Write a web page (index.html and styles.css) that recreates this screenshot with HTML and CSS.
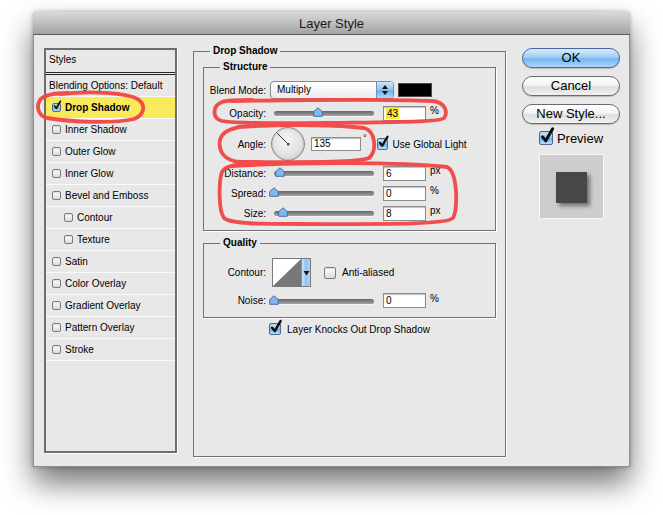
FILE: index.html
```html
<!DOCTYPE html>
<html>
<head>
<meta charset="utf-8">
<title>Layer Style</title>
<link rel="stylesheet" href="styles.css">
</head>
<body>
<div class="dialog">
  <div class="titlebar">Layer Style</div>
  <div class="dlg-body">
    <div class="styles-panel">
      <div class="styles-head">Styles</div>
      <div class="srow plain">Blending Options: Default</div>
      <div class="srow sel"><span class="cb cb-s on"><svg viewBox="0 0 12 12"><path d="M2.2 6 L5 9.4 L11 -1"/></svg></span><b>Drop Shadow</b></div>
      <div class="srow"><span class="cb cb-s"></span>Inner Shadow</div>
      <div class="srow"><span class="cb cb-s"></span>Outer Glow</div>
      <div class="srow"><span class="cb cb-s"></span>Inner Glow</div>
      <div class="srow"><span class="cb cb-s"></span>Bevel and Emboss</div>
      <div class="srow sub"><span class="cb cb-s"></span>Contour</div>
      <div class="srow sub"><span class="cb cb-s"></span>Texture</div>
      <div class="srow"><span class="cb cb-s"></span>Satin</div>
      <div class="srow"><span class="cb cb-s"></span>Color Overlay</div>
      <div class="srow"><span class="cb cb-s"></span>Gradient Overlay</div>
      <div class="srow"><span class="cb cb-s"></span>Pattern Overlay</div>
      <div class="srow"><span class="cb cb-s"></span>Stroke</div>
    </div>

    <fieldset class="main-fs">
      <legend>Drop Shadow</legend>
      <fieldset class="sub-fs structure">
        <legend>Structure</legend>
        <div class="frow r-blend">
          <span class="lbl">Blend Mode:</span>
          <div class="select"><span class="val">Multiply</span><span class="arr"><svg viewBox="0 0 8 12" width="8" height="12"><path d="M4 1 L7 5 H1 Z M4 11 L7 7 H1 Z"/></svg></span></div>
          <span class="swatch"></span>
        </div>
        <div class="frow r-op">
          <span class="lbl">Opacity:</span>
          <div class="slider"><span class="thumb" style="left:39px"><svg viewBox="0 0 10 10"><path d="M0.7 9.3 V4.6 L5 0.8 L9.3 4.6 V9.3 Z"/></svg></span></div>
          <span class="num"><span class="hl">43</span></span>
          <span class="unit">%</span>
        </div>
        <div class="frow r-angle">
          <span class="lbl">Angle:</span>
          <span class="dial"><svg viewBox="0 0 34 34" width="34" height="34"><line x1="6" y1="6" x2="17" y2="17"/><rect x="16" y="16" width="2.4" height="2.4"/></svg></span>
          <span class="num wide">135</span>
          <span class="deg">°</span>
          <span class="cb cb-m on gl"><svg viewBox="0 0 12 12"><path d="M2.2 6 L5 9.4 L11 -1"/></svg></span>
          <span class="gl-text">Use Global Light</span>
        </div>
        <div class="frow r-slide">
          <span class="lbl">Distance:</span>
          <div class="slider"><span class="thumb" style="left:1px"><svg viewBox="0 0 10 10"><path d="M0.7 9.3 V4.6 L5 0.8 L9.3 4.6 V9.3 Z"/></svg></span></div>
          <span class="num">6</span>
          <span class="unit">px</span>
        </div>
        <div class="frow r-slide">
          <span class="lbl">Spread:</span>
          <div class="slider"><span class="thumb" style="left:-5px"><svg viewBox="0 0 10 10"><path d="M0.7 9.3 V4.6 L5 0.8 L9.3 4.6 V9.3 Z"/></svg></span></div>
          <span class="num">0</span>
          <span class="unit">%</span>
        </div>
        <div class="frow r-slide">
          <span class="lbl">Size:</span>
          <div class="slider"><span class="thumb" style="left:4px"><svg viewBox="0 0 10 10"><path d="M0.7 9.3 V4.6 L5 0.8 L9.3 4.6 V9.3 Z"/></svg></span></div>
          <span class="num">8</span>
          <span class="unit">px</span>
        </div>
      </fieldset>

      <fieldset class="sub-fs quality">
        <legend>Quality</legend>
        <div class="frow r-contour">
          <span class="lbl">Contour:</span>
          <div class="contour">
            <span class="curve"><svg viewBox="0 0 28 27" width="28" height="27"><path d="M0 27 L28 0 V27 Z"/></svg></span>
            <span class="drop"><svg viewBox="0 0 7 6" width="7" height="6"><path d="M0.5 1 H6.5 L3.5 5.5 Z"/></svg></span>
          </div>
          <span class="cb cb-l aa"></span>
          <span class="aa-text">Anti-aliased</span>
        </div>
        <div class="frow r-noise">
          <span class="lbl">Noise:</span>
          <div class="slider"><span class="thumb" style="left:-5px"><svg viewBox="0 0 10 10"><path d="M0.7 9.3 V4.6 L5 0.8 L9.3 4.6 V9.3 Z"/></svg></span></div>
          <span class="num">0</span>
          <span class="unit">%</span>
        </div>
      </fieldset>

      <div class="knock">
        <span class="cb cb-l on"><svg viewBox="0 0 12 12"><path d="M2.2 6 L5 9.4 L11 -1"/></svg></span>
        <span>Layer Knocks Out Drop Shadow</span>
      </div>
    </fieldset>

    <div class="btn-col">
      <div class="btn default">OK</div>
      <div class="btn">Cancel</div>
      <div class="btn">New Style...</div>
      <div class="preview-row">
        <span class="cb cb-xl on"><svg viewBox="0 0 12 12"><path d="M2.2 6 L5 9.4 L11 -1"/></svg></span>
        <span>Preview</span>
      </div>
      <div class="preview-box"><span class="preview-sq"></span></div>
    </div>
  </div>
</div>

<svg class="annot" viewBox="0 0 663 515" width="663" height="515">
  <path d="M60 94 C88 91 128 92 139 100 C146 106 144 115 134 119 C112 124 72 122 47 118 C38 116 36 106 40 100 C44 95 54 93 68 93"/>
  <path d="M232 101 C300 100 390 99 432 101 C446 102 448 113 444 118 C440 122 400 122 330 123 C280 123 240 124 222 121 C212 118 212 106 222 102 C228 100 240 100 252 100"/>
  <path d="M238 127 C290 124 340 125 364 128 C376 131 377 151 369 158 C356 163 300 162 240 162 C225 161 218 152 220 140 C222 131 232 127 250 126"/>
  <path d="M232 166 C300 162 400 162 447 167 C458 172 458 210 453 218 C446 225 380 224 300 224 C262 224 231 224 224 218 C218 210 219 180 222 172 C225 166 236 164 252 164"/>
</svg>
</body>
</html>
```

FILE: styles.css
```css
* { box-sizing: border-box; }
html, body { margin: 0; }
body {
  width: 663px;
  height: 515px;
  background: #fff;
  font-family: "Liberation Sans", Arial, sans-serif;
  font-size: 10px;
  color: #000;
  padding: 12px 0 0 33px;
  position: relative;
  overflow: hidden;
}

.dialog {
  width: 597px;
  height: 455px;
  background: #e8e8e8;
  border: 1px solid #8f8f8f;
  border-top: none;
  border-radius: 5px 5px 0 0;
  box-shadow: 0 16px 30px rgba(0,0,0,.55), 0 0 4px rgba(0,0,0,.3);
  display: flex;
  flex-direction: column;
}

.titlebar {
  height: 23px;
  margin: 0 -1px;
  border-radius: 5px 5px 0 0;
  background: linear-gradient(#dadada, #a3a3a3);
  border-bottom: 1px solid #5b5b5b;
  text-align: center;
  font-size: 13px;
  line-height: 23px;
  color: #1a1a1a;
}

.dlg-body {
  display: flex;
  align-items: flex-start;
  padding: 13px 9px 0 10px;
  flex: 1;
}

/* styles list */
.styles-panel {
  width: 133px;
  height: 405px;
  flex: none;
  border: 2px solid #6d6d6d;
  box-shadow: 1px 1px 0 #fff;
}
.styles-head {
  height: 25px;
  padding-left: 3px;
  line-height: 20px;
  border-bottom: 3px double #262626;
}
.srow {
  height: 22px;
  border-bottom: 1px solid #fbfbfb;
  display: flex;
  align-items: center;
  gap: 4px;
  padding-left: 6px;
}
.srow.plain { padding-left: 3px; }
.srow.sub { padding-left: 18px; }
.srow.sel { background: #f9ea5b; }

/* checkboxes */
.cb {
  position: relative;
  flex: none;
  display: inline-block;
  border: 1px solid #7c7c7c;
  border-radius: 2px;
  background: linear-gradient(#ffffff, #dadada);
  box-shadow: inset 0 1px 1px rgba(0,0,0,.12);
}
.cb-s { width: 9px; height: 9px; }
.cb-m { width: 11px; height: 12px; }
.cb-l { width: 12px; height: 12px; }
.cb-xl { width: 14px; height: 14px; }
.cb.on {
  background: linear-gradient(#d4eafd, #8ec3f1 50%, #6eb0ec 55%, #b8ddfb);
  border-color: #52698a;
}
.cb svg {
  position: absolute;
  left: 0;
  top: -2px;
  width: 115%;
  height: 115%;
  overflow: visible;
  fill: none;
  stroke: #0c0c0c;
  stroke-width: 2.6;
  stroke-linecap: round;
  stroke-linejoin: round;
}

/* main group */
.main-fs {
  width: 313px;
  height: 412px;
  flex: none;
  margin: -3px 16px 0 16px;
  padding: 4px 9px 0 9px;
  border: 1px solid #737373;
  box-shadow: 1px 1px 0 #fff;
  min-width: 0;
}
.main-fs > legend {
  margin-left: 7px;
  padding: 0 3px;
  font-weight: bold;
  line-height: 12px;
}
.sub-fs {
  width: 293px;
  margin: 0;
  padding: 8px 0 9px 0;
  border: 1px solid #737373;
  box-shadow: 1px 1px 0 #fff;
  min-width: 0;
}
.sub-fs > legend {
  margin-left: 16px;
  padding: 0 3px;
  font-weight: bold;
  line-height: 12px;
}
.quality { margin-top: 6px; padding-top: 9px; }

.frow {
  display: flex;
  align-items: center;
  height: 16px;
  margin-top: 4px;
}
.r-blend { height: 18px; margin-top: 0; }
.r-op { margin-top: 6px; }
.r-angle { height: 34px; margin-top: 6px; }
.r-contour { height: 29px; margin-top: 0; }
.r-noise { height: 15px; margin-top: 6px; }

.lbl { width: 62px; flex: none; text-align: right; }

.select {
  width: 124px;
  height: 18px;
  margin-left: 4px;
  border: 1px solid #8a8a8a;
  border-radius: 4px;
  display: flex;
  background: linear-gradient(#ffffff, #ebebeb);
  overflow: hidden;
  box-shadow: 0 1px 1px rgba(0,0,0,.15);
}
.select .val { flex: 1; padding-left: 6px; line-height: 16px; }
.select .arr {
  width: 17px;
  border-left: 1px solid #7191b8;
  background: linear-gradient(#cde5fb, #8ec3f1 50%, #6fb0ec 55%, #acd6fa);
  display: flex;
  align-items: center;
  justify-content: center;
}
.select .arr svg { fill: #111; }
.swatch {
  width: 34px;
  height: 14px;
  margin-left: 4px;
  background: #000;
  border: 1px solid #4a4a4a;
}

.slider {
  position: relative;
  width: 100px;
  height: 16px;
  margin-left: 8px;
  flex: none;
}
.slider::before {
  content: "";
  position: absolute;
  left: 0;
  right: 0;
  top: 6px;
  height: 5px;
  border-radius: 3px;
  background: linear-gradient(#666, #a4a4a4);
  box-shadow: 0 1px 0 #f6f6f6;
}
.thumb {
  position: absolute;
  top: 2px;
  width: 10px;
  height: 10px;
}
.thumb svg {
  display: block;
  width: 10px;
  height: 10px;
  fill: #7fb7ee;
  stroke: #3f6596;
  stroke-width: 0.9;
  stroke-linejoin: round;
}

.num {
  width: 43px;
  height: 15px;
  margin-left: 9px;
  flex: none;
  background: #fff;
  border: 1px solid #8c8c8c;
  box-shadow: inset 0 1px 1px rgba(0,0,0,.25);
  padding-left: 2px;
  line-height: 13px;
}
.num.wide { width: 50px; height: 14px; margin-left: 6px; line-height: 12px; }
.hl { background: #f8e83c; padding: 0 1px; }
.unit { margin-left: 4px; align-self: flex-start; line-height: 12px; }
.r-op .unit, .r-slide .unit, .r-noise .unit { align-self: center; margin-top: -4px; }

.dial {
  width: 34px;
  height: 34px;
  margin-left: 5px;
  flex: none;
  border-radius: 50%;
  border: 1px solid #8d8d8d;
  background: radial-gradient(circle at 45% 40%, #f6f6f6 0%, #e2e2e2 55%, #c3c3c3 100%);
  box-shadow: inset 0 0 2px rgba(0,0,0,.3), 0 1px 1px rgba(255,255,255,.8);
  position: relative;
}
.dial svg { position: absolute; left: -1px; top: -1px; }
.dial line { stroke: #333; stroke-width: 1; }
.dial rect { fill: #444; }
.deg { margin-left: 2px; align-self: flex-start; margin-top: 7px; font-size: 9px; line-height: 9px; }
.gl { margin-left: 10px; }
.gl-text { margin-left: 5px; }

.contour {
  display: flex;
  height: 29px;
  margin-left: 6px;
  border: 1px solid #7a7a7a;
  flex: none;
}
.contour .curve { width: 28px; height: 27px; background: #fff; }
.contour .curve svg { display: block; fill: #787878; }
.contour .drop {
  width: 9px;
  border-left: 1px solid #7191b8;
  background: linear-gradient(90deg, #cde5fb, #8ec3f1 50%, #acd6fa);
  display: flex;
  align-items: center;
  justify-content: center;
}
.contour .drop svg { fill: #111; }
.aa { margin-left: 13px; }
.aa-text { margin-left: 6px; }

.knock {
  display: flex;
  justify-content: center;
  align-items: center;
  gap: 6px;
  margin-top: 5px;
  height: 12px;
}

/* buttons */
.btn-col {
  width: 98px;
  flex: none;
  display: flex;
  flex-direction: column;
  align-items: center;
}
.btn {
  width: 98px;
  height: 20px;
  margin-bottom: 8px;
  border-radius: 10px;
  border: 1px solid #6b6b6b;
  background: linear-gradient(#ffffff 0%, #f3f3f3 45%, #dedede 55%, #f1f1f1 100%);
  box-shadow: 0 1px 1px rgba(0,0,0,.2);
  font-size: 13px;
  line-height: 18px;
  text-align: center;
}
.btn.default {
  background: linear-gradient(#d6ebfd 0%, #a3cff6 45%, #75b4ef 55%, #acd8fc 100%);
  border-color: #47679a;
}
.preview-row {
  display: flex;
  align-items: center;
  gap: 4px;
  height: 14px;
  margin-top: -1px;
  font-size: 13px;
}
.preview-box {
  width: 65px;
  height: 65px;
  margin-top: 9px;
  background: #cdcdcd;
  border: 1px solid #f6f6f6;
  padding: 17px 0 0 16px;
}
.preview-sq {
  display: block;
  width: 31px;
  height: 31px;
  background: #474747;
  box-shadow: 3px 3px 4px rgba(0,0,0,.45);
}

/* hand-drawn annotations over the screenshot */
.annot {
  position: absolute;
  left: 0;
  top: 0;
  pointer-events: none;
  fill: none;
  stroke: #f34545;
  stroke-width: 3.8;
  stroke-linecap: round;
  stroke-linejoin: round;
  opacity: .95;
}
```
